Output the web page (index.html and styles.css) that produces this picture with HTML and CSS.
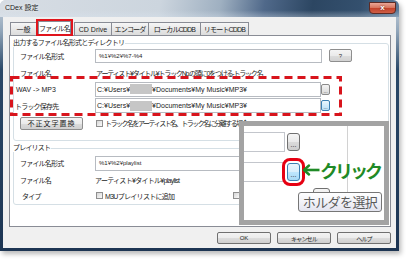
FILE: index.html
```html
<!DOCTYPE html>
<html lang="ja">
<head>
<meta charset="utf-8">
<title>CDex 設定</title>
<link rel="stylesheet" href="styles.css">
</head>
<body>
<div class="window">
  <div class="titlebar">
    <span class="title">CDex 設定</span>
    <span class="close">x</span>
  </div>
  <div class="client">
    <div class="tabs">
      <div class="tab t1">一般</div>
      <div class="tab t2 active ja">ファイル名</div>
      <div class="tab t3">CD Drive</div>
      <div class="tab t4 ja">エンコーダ</div>
      <div class="tab t5 ja">ローカルCDDB</div>
      <div class="tab t6 ja">リモートCDDB</div>
    </div>
    <div class="panel">
      <fieldset class="group g1">
        <legend class="ja">出力するファイル名形式とディレクトリ</legend>
        <div class="rows rows1">
          <div class="lbl ja">ファイル名形式</div>
          <div class="val"><div class="input w1 pct">%1¥%2¥%7-%4</div><div class="qbtn">?</div></div>

          <div class="lbl ja">ファイル名</div>
          <div class="val ja long">アーティスト¥タイトル¥トラックNo.の頭に0をつける-トラック名</div>

          <div class="lbl lbl-a">WAV -&gt; MP3</div>
          <div class="val"><div class="input w2">C:¥Users¥<span class="mask"></span>¥Documents¥My Music¥MP3¥</div><div class="dots">...</div></div>

          <div class="lbl lbl-b ja">トラック保存先</div>
          <div class="val"><div class="input w2">C:¥Users¥<span class="mask"></span>¥Documents¥My Music¥MP3¥</div><div class="dots hot">...</div></div>

          <div class="lbl"><div class="pbtn">不正文字置換</div></div>
          <div class="val chk"><span class="cb"></span><span class="ja tight">トラック名をアーティスト名、トラック名に分離する場合</span></div>
        </div>
      </fieldset>
      <fieldset class="group g2">
        <legend class="ja">プレイリスト</legend>
        <div class="rows rows2">
          <div class="lbl ja">ファイル名形式</div>
          <div class="val"><div class="input w2 pct">%1¥%2¥playlist</div></div>

          <div class="lbl ja">ファイル名</div>
          <div class="val ja mid">アーティスト¥タイトル¥playlist</div>

          <div class="lbl lbl-c ja">タイプ</div>
          <div class="val types">
            <span class="chk"><span class="cb"></span><span class="ja mid">M3Uプレイリストに追加</span></span>
            <span class="chk"><span class="cb"></span></span>
          </div>
        </div>
      </fieldset>
    </div>
    <div class="btns">
      <div class="btn">OK</div>
      <div class="btn ja">キャンセル</div>
      <div class="btn ja">ヘルプ</div>
    </div>
  </div>

  <svg class="dashbox" width="332" height="40" viewBox="0 0 332 40">
    <rect x="1.5" y="1.5" width="329" height="37" fill="none" stroke="#d8141c" stroke-width="3" stroke-dasharray="8 5"/>
  </svg>

  <div class="callout">
    <div class="z-in z-in1"></div>
    <div class="z-btn z-btn1">...</div>
    <div class="z-in z-in2"></div>
    <div class="z-btn z-btn2">...</div>
    <div class="z-vline"></div>
    <div class="z-click">
      <svg class="arrow" width="18" height="12" viewBox="0 0 18 12">
        <path d="M7 1.5 L2 6 L7 10.5" fill="none" stroke="#1f8a26" stroke-width="2.4" stroke-linecap="round" stroke-linejoin="round"/>
        <path d="M2.5 6 H17.5" fill="none" stroke="#1f8a26" stroke-width="2.6"/>
      </svg><span>クリック</span>
    </div>
    <div class="z-btn z-btn3"></div>
    <div class="z-tip">ホルダを選択</div>
  </div>
</div>
</body>
</html>
```

FILE: styles.css
```css
* { box-sizing: border-box; }
html, body { margin: 0; padding: 0; }
body {
  width: 408px;
  height: 260px;
  overflow: hidden;
  background: #ffffff;
  font-family: "Liberation Sans", "Noto Sans CJK JP", sans-serif;
  font-size: 7px;
  color: #1c1c1c;
}
.ja { letter-spacing: -0.8px; }

.window {
  position: relative;
  width: 399px;
  height: 251px;
  display: flex;
  flex-direction: column;
  border-radius: 6px 6px 0 0;
  background: linear-gradient(to bottom, #cbd4de 0px, #93a7bb 30px, #2a4868 70px, #1d3553 100%);
  box-shadow: 2px 3px 5px rgba(0, 0, 0, 0.28);
}

.titlebar {
  height: 17px;
  flex: none;
  display: flex;
  justify-content: space-between;
  align-items: flex-start;
  padding-left: 5px;
  border-radius: 6px 6px 0 0;
  background:
    linear-gradient(to bottom, rgba(255,255,255,0) 60%, rgba(220,230,240,0.35) 100%),
    linear-gradient(100deg, #d7dde4 0%, #ccd5de 40%, #9fb0c1 55%, #50698a 66%, #2c4662 78%, #34506e 90%, #5d7c9a 100%);
}
.title {
  margin-top: 4px;
  font-size: 7px;
  line-height: 8px;
  color: #202020;
  text-shadow: 0 0 3px rgba(255,255,255,0.9);
}
.close {
  margin: 2px 3px 0 0;
  width: 27px;
  height: 12px;
  border: 1px solid #5d2a24;
  border-radius: 0 0 4px 4px;
  background: linear-gradient(to bottom, #e9a697 0%, #d8765f 45%, #c2412a 52%, #cf5f46 100%);
  color: #fff;
  font-weight: bold;
  font-size: 8px;
  line-height: 9px;
  text-align: center;
  text-shadow: 0 0 2px #5a1a10;
}

.client {
  flex: 1;
  margin: 0 3px 3px 3px;
  background: #f0f0f0;
  padding: 0 5px 0 6px;
  display: flex;
  flex-direction: column;
}

.tabs {
  height: 18px;
  flex: none;
  display: flex;
  align-items: flex-end;
  padding-left: 1px;
}
.tab {
  height: 13px;
  border: 1px solid #898c95;
  border-bottom: 0;
  margin-right: -1px;
  background: linear-gradient(to bottom, #f6f6f6 0%, #e8e8e8 50%, #dcdcdc 100%);
  display: flex;
  align-items: center;
  justify-content: center;
  white-space: nowrap;
  font-size: 7px;
}
.t1 { width: 27px; }
.t2 { width: 33px; }
.t3 { width: 38px; }
.t4 { width: 38px; }
.t5 { width: 53px; }
.t6 { width: 49px; }
.tab.active {
  margin: 0 3px 1px 2px;
  background: #ffffff;
  outline: 2px solid #e0141c;
  position: relative;
  z-index: 1;
}

.panel {
  height: 192px;
  flex: none;
  background: #ffffff;
  border: 1px solid #898c95;
  padding: 3px 0 0 3px;
}

.group {
  margin: 0;
  padding: 0;
  width: 376px;
  min-width: 0;
  border: 1px solid #d5dfe5;
  border-radius: 3px;
}
.group legend {
  padding: 0 1px;
  margin-left: -2px;
  height: 8px;
  line-height: 8px;
  font-size: 7px;
}
.g2 { margin-top: 3px; }

.rows {
  display: grid;
  grid-template-columns: 81px 1fr;
  align-items: center;
}
.rows1 {
  grid-template-rows: 17px 17px 16px 17px 18px;
  padding-bottom: 8px;
}
.rows2 {
  grid-template-rows: 16px 18px 13px;
  padding-top: 3px;
  padding-bottom: 2px;
}
.lbl { padding-left: 6px; white-space: nowrap; }
.lbl-a { padding-left: 2px; }
.lbl-b { padding-left: 1px; }
.lbl-c { padding-left: 8px; }
.val { display: flex; align-items: center; white-space: nowrap; }
.long { letter-spacing: -1.2px; padding-left: 1px; }
.mid { letter-spacing: -0.7px; }
.tight { letter-spacing: -1.5px; }

.input {
  height: 14px;
  border: 1px solid #b7bbc1;
  background: #ffffff;
  display: flex;
  align-items: center;
  padding-left: 1px;
  white-space: nowrap;
  overflow: hidden;
}
.w1 { width: 227px; }
.w2 { width: 226px; height: 15px; }
.pct { padding-left: 3px; font-size: 6px; }
.mask {
  display: inline-block;
  width: 22px;
  height: 10px;
  background: #c6c6c6;
}
.qbtn {
  margin-left: 7px;
  width: 23px;
  height: 13px;
  border: 1px solid #8e8e8e;
  border-radius: 2px;
  background: linear-gradient(to bottom, #f4f4f4 0%, #ebebeb 50%, #dddddd 51%, #d2d2d2 100%);
  display: flex;
  align-items: center;
  justify-content: center;
  font-size: 6px;
  color: #333;
}
.dots {
  width: 9px;
  height: 11px;
  border: 1px solid #8a8a8a;
  border-radius: 2px;
  background: linear-gradient(to bottom, #f4f4f4, #d9d9d9);
  font-size: 5px;
  line-height: 12px;
  text-align: center;
  color: #333;
  overflow: hidden;
}
.dots.hot {
  border-color: #3c7fb1;
  background: linear-gradient(to bottom, #eaf6fd, #b9e0f7);
}
.pbtn {
  width: 63px;
  height: 13px;
  border: 1px solid #8e8e8e;
  border-radius: 2px;
  background: linear-gradient(to bottom, #f4f4f4 0%, #ebebeb 50%, #dddddd 51%, #cfcfcf 100%);
  display: flex;
  align-items: center;
  justify-content: center;
  letter-spacing: 1px;
}
.chk { display: flex; align-items: center; }
.cb {
  display: inline-block;
  width: 7px;
  height: 7px;
  margin: 0 2px 0 1px;
  border: 1px solid #8f8f8f;
  background: linear-gradient(135deg, #d6d6d6, #fafafa);
  flex: none;
}
.types {
  display: grid;
  grid-template-columns: 137px auto;
}

.btns {
  display: flex;
  justify-content: flex-end;
  gap: 6px;
  margin-top: 5px;
}
.btn {
  width: 54px;
  height: 12px;
  border: 1px solid #707070;
  border-radius: 2px;
  background: linear-gradient(to bottom, #f3f3f3 0%, #ebebeb 50%, #dddddd 51%, #cfcfcf 100%);
  display: flex;
  align-items: center;
  justify-content: center;
  font-size: 6px;
}

.dashbox {
  position: absolute;
  left: 10px;
  top: 76px;
}

.callout {
  position: absolute;
  left: 239px;
  top: 121px;
  width: 150px;
  height: 104px;
  border: 5px solid #a3a3a3;
  background: #ffffff;
  display: grid;
  grid-template-columns: 41px 2px 13px 47px 37px;
  grid-template-rows: 6px 20px 10px 20px 6px 4px 20px 8px;
}
.z-in {
  grid-column: 1;
  border: 1px solid #c3c6cc;
  border-left: 0;
  background: #fff;
}
.z-in1 { grid-row: 2; }
.z-in2 { grid-row: 4; }
.z-btn {
  grid-column: 3;
  margin: 1px 0;
  border: 1px solid #707070;
  border-radius: 3px;
  background: linear-gradient(to bottom, #f5f5f5 0%, #e9e9e9 50%, #dadada 52%, #cdcdcd 100%);
  font-size: 7px;
  line-height: 22px;
  text-align: center;
  color: #222;
  overflow: hidden;
}
.z-btn1 { grid-row: 2; }
.z-btn2 {
  grid-row: 4;
  border-color: #3c7fb1;
  background: linear-gradient(to bottom, #eaf6fd 0%, #d9effc 50%, #bee6fd 52%, #a7d9f5 100%);
  outline: 3px solid #e60012;
  outline-offset: 2px;
  position: relative;
  z-index: 2;
}
.z-vline {
  grid-column: 5;
  grid-row: 1 / 7;
  border-left: 1px solid #d2d2d2;
}
.z-click {
  grid-column: 4 / 6;
  grid-row: 3 / 6;
  align-self: center;
  display: flex;
  align-items: center;
  padding-left: 2px;
  font-family: "Noto Sans CJK JP", sans-serif;
  font-weight: 700;
  font-size: 18px;
  line-height: 20px;
  letter-spacing: -3px;
  color: #1f8a26;
  white-space: nowrap;
  position: relative;
  z-index: 3;
}
.arrow { flex: none; margin-right: 0; }
.z-btn3 {
  grid-column: 4;
  grid-row: 6 / 8;
  margin: 0 0 0 13px;
  width: 17px;
  height: 20px;
}
.z-tip {
  grid-column: 3 / 6;
  grid-row: 7;
  margin-left: 11px;
  width: 84px;
  border: 1px solid #767676;
  border-radius: 3px;
  background: linear-gradient(to bottom, #ffffff, #e4e5f0);
  color: #5a5a5a;
  font-family: "Noto Sans CJK JP", sans-serif;
  font-size: 13px;
  line-height: 18px;
  letter-spacing: -0.6px;
  text-align: center;
  white-space: nowrap;
  position: relative;
  z-index: 4;
}
```
